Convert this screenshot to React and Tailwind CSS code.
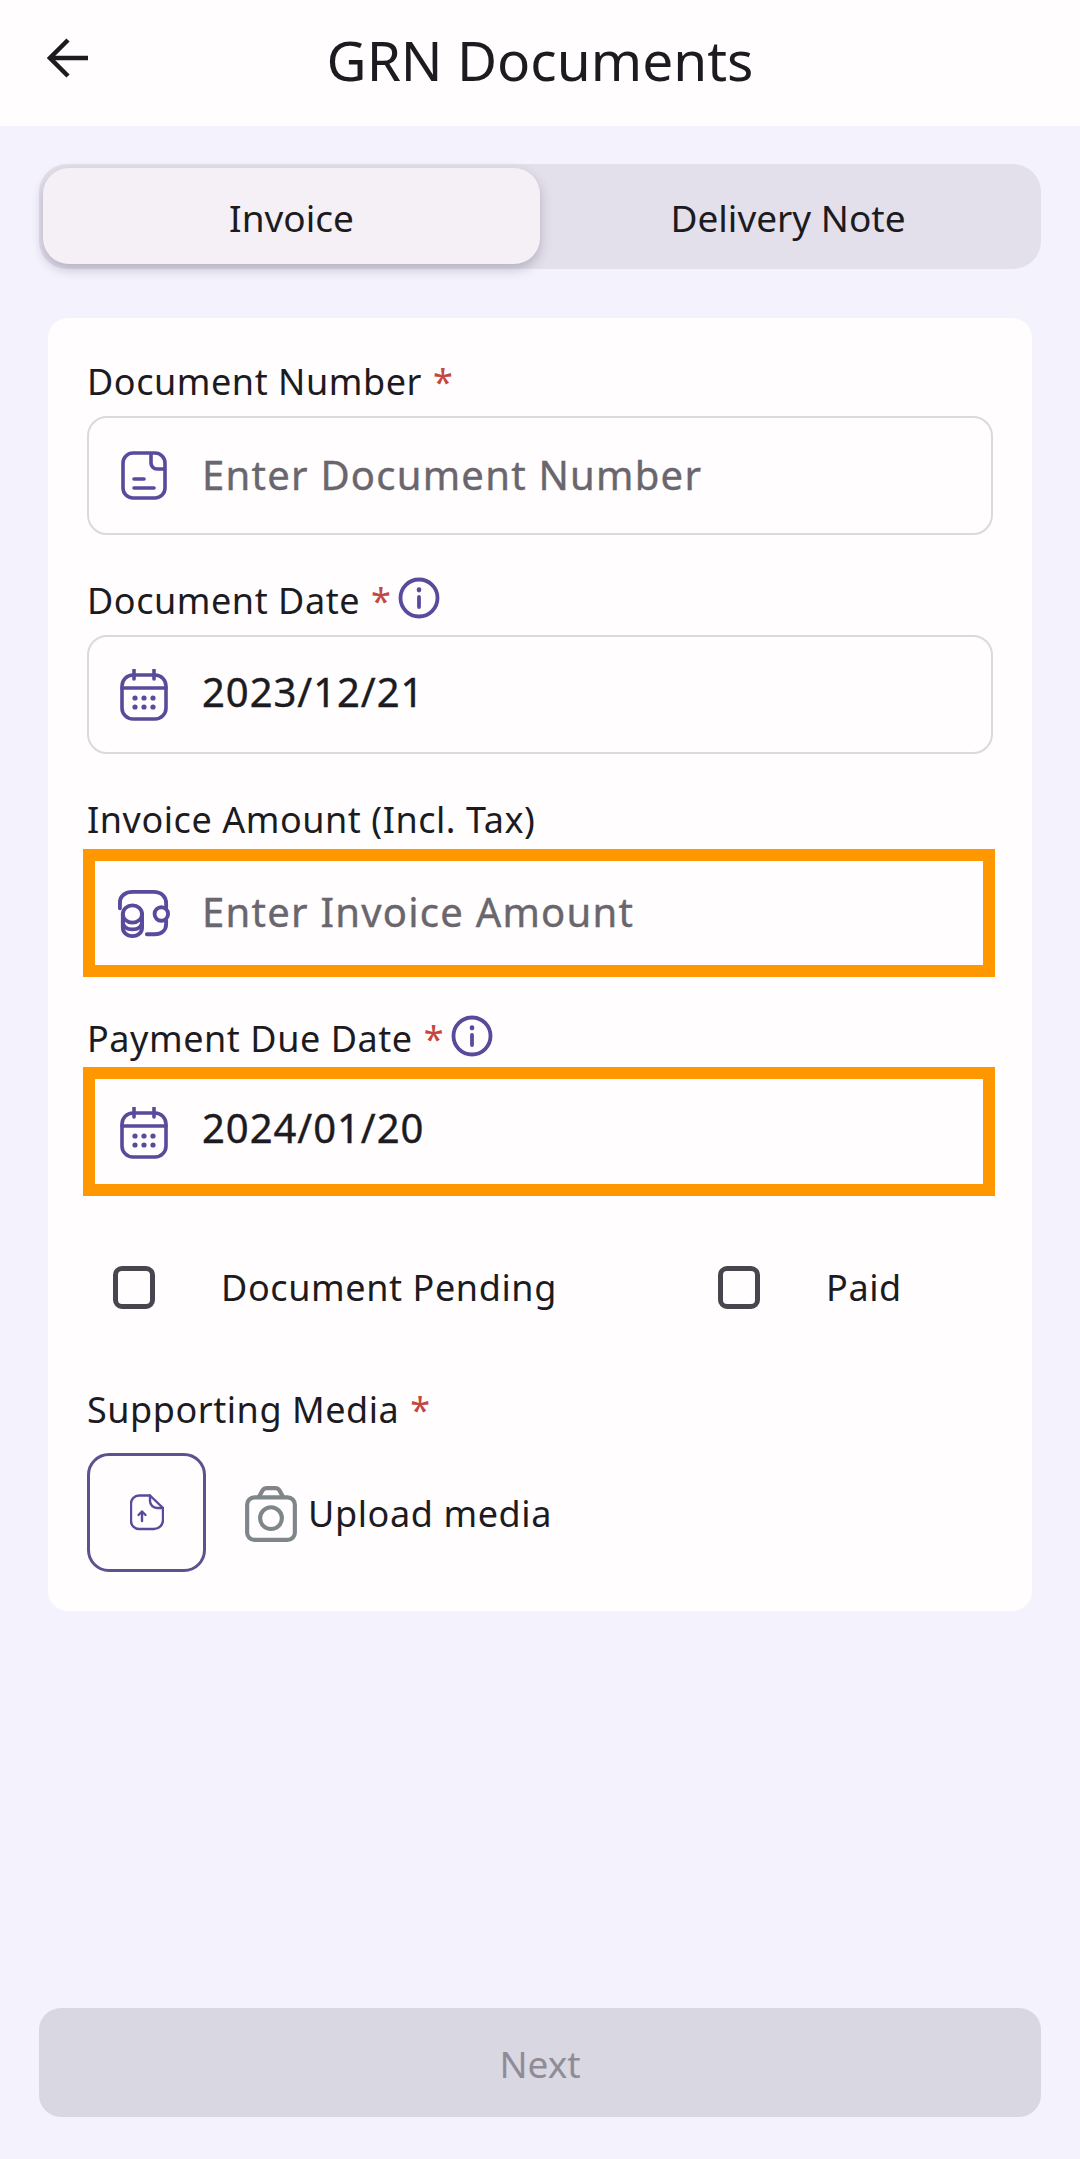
const purple = "#5a4a9c";

function BackArrow() {
  return (
    <svg width="42" height="40" viewBox="0 0 42 40" fill="none" stroke="#1c1b1f" strokeWidth="4.5">
      <path d="M41 20H4" />
      <path d="M21 2L3 20l18 18" />
    </svg>
  );
}

function DocIcon() {
  return (
    <svg width="48" height="52" viewBox="0 0 48 52" fill="none" stroke={purple} strokeWidth="3.6" strokeLinecap="round">
      <rect x="3" y="3" width="42" height="45" rx="10" />
      <path d="M31 5v8a6 6 0 0 0 6 6h7" />
      <path d="M14 29h10" />
      <path d="M14 38h20" />
    </svg>
  );
}

function CalendarIcon() {
  return (
    <svg width="48" height="52" viewBox="0 0 48 52" fill={purple} stroke="none">
      <g fill="none" stroke={purple} strokeWidth="3.6" strokeLinecap="round">
        <rect x="2" y="6" width="44" height="44" rx="11" />
        <path d="M2 19h44" />
        <path d="M14 1v9" />
        <path d="M34 1v9" />
      </g>
      <circle cx="15" cy="29" r="2.6" />
      <circle cx="24" cy="29" r="2.6" />
      <circle cx="33" cy="29" r="2.6" />
      <circle cx="15" cy="38" r="2.6" />
      <circle cx="24" cy="38" r="2.6" />
      <circle cx="33" cy="38" r="2.6" />
    </svg>
  );
}

function WalletIcon() {
  return (
    <svg width="54" height="50" viewBox="0 0 54 50" fill="none" stroke={purple} strokeWidth="4" strokeLinecap="round">
      <path d="M2 19V13C2 6 8 2 15 2h22c8 0 13 5 13 12v5" />
      <path d="M50 32v3c0 7-5 11-12 11h-8" />
      <rect x="38" y="18" width="14" height="14" rx="7" />
      <ellipse cx="15" cy="25" rx="10" ry="9" />
      <path d="M5 25v14c0 5 4 9 10 9s10-4 10-9V25" />
      <path d="M5 33c0 5 4 8 10 8s10-3 10-8" />
    </svg>
  );
}

function InfoIcon() {
  return (
    <svg width="42" height="42" viewBox="0 0 42 42" fill="none" stroke={purple} strokeWidth="3.8" strokeLinecap="round">
      <circle cx="21" cy="21" r="18.5" />
      <path d="M21 20v10" />
      <path d="M21 12.500v.6" strokeWidth="4.6" />
    </svg>
  );
}

function UploadIcon() {
  return (
    <svg width="34" height="37" viewBox="0 0 34 37" fill="none" stroke={purple} strokeWidth="2.4" strokeLinecap="round" strokeLinejoin="round">
      <path d="M20 1.500H9a8 8 0 0 0-8 8V27a8 8 0 0 0 8 8h15a9 9 0 0 0 9-9V14z" />
      <path d="M20 1.500V7a7 7 0 0 0 7 7h6" />
      <path d="M12 27v-9" />
      <path d="M8.500 21l3.500-3.500 3.500 3.500" />
    </svg>
  );
}

function CameraIcon() {
  return (
    <svg width="52" height="56" viewBox="0 0 50 54" fill="none" stroke="#7f8689" strokeWidth="4" strokeLinejoin="round">
      <rect x="2" y="11" width="46" height="41" rx="7" />
      <path d="M13 11l4-7c1-1.500 2-2 4-2h8c2 0 3 .5 4 2l4 7" />
      <circle cx="25" cy="31" r="10.500" />
    </svg>
  );
}

function Field({ label, required, info, icon, placeholder, value, highlight, textClass }) {
  return (
    <div className="mb-[42px]">
      <div className="flex h-[48px] items-center mb-[10px] text-[36px] tracking-[0.55px] text-[#1c1b1f]">
        <span>{label}</span>
        {required && <span className="ml-[11px] text-[#c4473f]">*</span>}
        {info && (
          <span className="ml-[7px] -mt-[6px]">
            <InfoIcon />
          </span>
        )}
      </div>
      <div className="relative flex h-[119px] items-center rounded-[20px] border-2 border-[#dcd9dd] pl-[29px]">
        <span className="flex w-[52px] justify-center">{icon}</span>
        <span className={textClass}>{value || placeholder}</span>
        {highlight && (
          <div
            className={
              highlight === "first"
                ? "absolute -top-[7px] -bottom-[6px] -left-[6px] -right-[4px] border-[12px] border-[#ff9800]"
                : "absolute -top-[8px] -bottom-[6px] -left-[6px] -right-[4px] border-[12px] border-[#ff9800]"
            }
          />
        )}
      </div>
    </div>
  );
}

function Check({ label, className }) {
  return (
    <div className={className}>
      <span className="-mt-[2px] block h-[43px] w-[42px] shrink-0 rounded-[9px] border-[5px] border-[#49454f]" />
      <span className="ml-[66px] text-[36px] tracking-[0.6px] text-[#1c1b1f]">{label}</span>
    </div>
  );
}

export default function App() {
  return (
    <div className="flex min-h-[2159px] flex-col bg-[#f4f2fd] font-['Noto_Sans',sans-serif]">
      <header className="relative flex h-[126px] items-center justify-center bg-[#fffdfe]">
        <span className="absolute left-[47px] top-[38px]">
          <BackArrow />
        </span>
        <h1 className="-mt-[6px] text-[55px] text-[#1c1b1f]">GRN Documents</h1>
      </header>

      <div className="mx-[39px] mt-[38px] flex h-[105px] rounded-[28px] bg-[#e3e0eb] p-[4px] pr-0">
        <div className="flex h-[96px] w-[497px] items-center justify-center rounded-[26px] bg-[#f4f0f6] pt-[3px] text-[37px] text-[#1c1b1f] shadow-[0_5px_12px_rgba(60,50,90,0.28)]">
          Invoice
        </div>
        <div className="flex h-[96px] flex-1 items-center justify-center pr-[5px] pt-[3px] text-[37px] text-[#1c1b1f]">
          Delivery Note
        </div>
      </div>

      <div className="mx-[48px] mt-[49px] rounded-[20px] bg-[#fffdfe] px-[39px] pt-[40px] pb-[39px]">
        <Field
          label="Document Number"
          required
          icon={<DocIcon />}
          placeholder="Enter Document Number"
          textClass="ml-[32px] -mt-[1px] text-[40px] tracking-[1.25px] text-[#69666d] [-webkit-text-stroke:0.4px_#69666d]"
        />
        <Field
          label="Document Date"
          required
          info
          icon={<CalendarIcon />}
          value="2023/12/21"
          textClass="ml-[32px] -mt-[6px] text-[40px] tracking-[0.95px] text-[#1c1b1f] [-webkit-text-stroke:0.4px_#1c1b1f]"
        />
        <Field
          label="Invoice Amount (Incl. Tax)"
          icon={<WalletIcon />}
          placeholder="Enter Invoice Amount"
          highlight="first"
          textClass="ml-[32px] -mt-[3px] text-[40px] tracking-[1.25px] text-[#69666d] [-webkit-text-stroke:0.4px_#69666d]"
        />
        <Field
          label="Payment Due Date"
          required
          info
          icon={<CalendarIcon />}
          value="2024/01/20"
          highlight="second"
          textClass="ml-[32px] -mt-[10px] text-[40px] tracking-[0.95px] text-[#1c1b1f] [-webkit-text-stroke:0.4px_#1c1b1f]"
        />

        <div className="mt-[74px] flex h-[44px] items-center">
          <Check label="Document Pending" className="ml-[26px] flex w-[605px] items-center" />
          <Check label="Paid" className="flex items-center" />
        </div>

        <div className="mt-[76px] flex h-[48px] items-center text-[36px] tracking-[0.55px] text-[#1c1b1f]">
          <span>Supporting Media</span>
          <span className="ml-[11px] text-[#c4473f]">*</span>
        </div>
        <div className="mt-[19px] flex items-center">
          <div className="flex h-[119px] w-[119px] items-center justify-center rounded-[22px] border-[3px] border-[#5f5190]">
            <UploadIcon />
          </div>
          <span className="ml-[39px] mt-[2px]">
            <CameraIcon />
          </span>
          <span className="ml-[11px] mt-[2px] text-[36px] tracking-[0.6px] text-[#1c1b1f]">Upload media</span>
        </div>
      </div>

      <button className="mx-[39px] mb-[42px] mt-auto h-[109px] rounded-[22px] bg-[#d9d7e2] pt-[2px] text-[37px] text-[#8f8c98]">
        Next
      </button>
    </div>
  );
}
